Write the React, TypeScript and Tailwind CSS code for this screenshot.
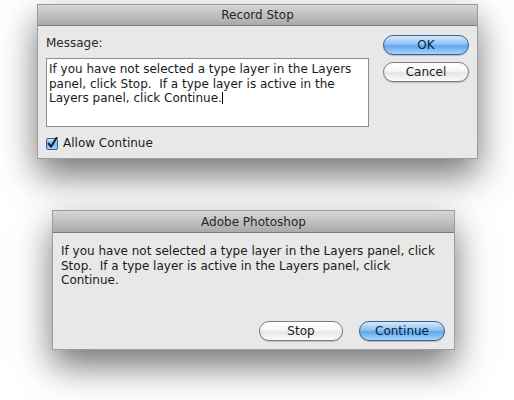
const font = { fontFamily: '"DejaVu Sans", "Lucida Grande", sans-serif' };

function AquaButton({ label, primary, width }: { label: string; primary?: boolean; width: string }) {
  return (
    <div
      className={`${width} h-[20px] rounded-full border flex items-center justify-center text-[12px] leading-none ${
        primary
          ? "border-[#3b5e93] bg-[linear-gradient(#d6e9fb_0%,#8ec1f3_45%,#5fa6ee_55%,#a8d6fb_100%)] text-[#0b1e3f]"
          : "border-[#7d7d7d] bg-[linear-gradient(#ffffff_0%,#f7f7f7_45%,#e6e6e6_55%,#fbfbfb_100%)] text-[#1b1b1b]"
      } shadow-[0_1px_1px_rgba(0,0,0,0.2)]`}
    >
      {label}
    </div>
  );
}

function TitleBar({ title, h }: { title: string; h: string }) {
  return (
    <div
      className={`${h} flex items-center justify-center border-b border-[#7b7b7b] bg-[linear-gradient(#d6d6d6,#aaaaaa)] text-[12px] text-[#262626]`}
    >
      {title}
    </div>
  );
}

function Checkbox() {
  return (
    <svg width="12" height="13" viewBox="0 0 12 13">
      <defs>
        <linearGradient id="cb" x1="0" y1="0" x2="0" y2="1">
          <stop offset="0" stopColor="#cfe5fb" />
          <stop offset="0.5" stopColor="#79b4ef" />
          <stop offset="1" stopColor="#a9d4fa" />
        </linearGradient>
      </defs>
      <rect x="0.5" y="1.5" width="11" height="11" rx="1.5" fill="url(#cb)" stroke="#3d5f8f" />
      <path d="M2.6 6.6 L5 9.6 L10.6 0.8" fill="none" stroke="#0f1f3a" strokeWidth="2" strokeLinecap="round" strokeLinejoin="round" />
    </svg>
  );
}

export default function App() {
  return (
    <div className="w-[514px] h-[400px] bg-white overflow-hidden flex flex-col" style={font}>
      <div className="ml-[37px] mt-[4px] w-[441px] h-[155px] flex flex-col bg-[#e8e8e8] border border-[#9c9c9c] shadow-[0_16px_34px_rgba(0,0,0,0.55)]">
        <TitleBar title="Record Stop" h="h-[21px]" />
        <div className="flex flex-1 pl-[8px] pr-[8px] pt-[9px]">
          <div className="w-[323px] flex flex-col">
            <div className="h-[16px] text-[12px] leading-[16px] text-[#2a2a2a]">Message:</div>
            <div className="mt-[7px] h-[69px] bg-white border border-[#8e8e8e] px-[2px] pt-[3px] text-[12px] leading-[14.5px] text-[#1a1a1a]">
              If you have not selected a type layer in the Layers panel, click Stop.&nbsp; If a type layer is active in the
              Layers panel, click Continue.
              <span className="inline-block w-[1px] h-[12px] bg-black align-[-2px]" />
            </div>
            <div className="mt-[8px] flex items-center gap-[5px]">
              <Checkbox />
              <span className="text-[12px] leading-[16px] text-[#1a1a1a]">Allow Continue</span>
            </div>
          </div>
          <div className="ml-[14px] flex flex-col gap-[7px]">
            <AquaButton label="OK" primary width="w-[86px]" />
            <AquaButton label="Cancel" width="w-[86px]" />
          </div>
        </div>
      </div>

      <div className="ml-[52px] mt-[51px] w-[403px] h-[140px] flex flex-col bg-[#e8e8e8] border border-[#9c9c9c] shadow-[0_16px_34px_rgba(0,0,0,0.55)]">
        <TitleBar title="Adobe Photoshop" h="h-[22px]" />
        <div className="flex flex-col flex-1 pl-[8px] pr-[9px] pt-[11px] pb-[8px]">
          <div className="text-[12px] leading-[14.5px] text-[#1a1a1a] w-[376px]">
            If you have not selected a type layer in the Layers panel, click Stop.&nbsp; If a type layer is active in the
            Layers panel, click Continue.
          </div>
          <div className="mt-auto flex justify-end gap-[16px]">
            <AquaButton label="Stop" width="w-[84px]" />
            <AquaButton label="Continue" primary width="w-[86px]" />
          </div>
        </div>
      </div>
    </div>
  );
}
